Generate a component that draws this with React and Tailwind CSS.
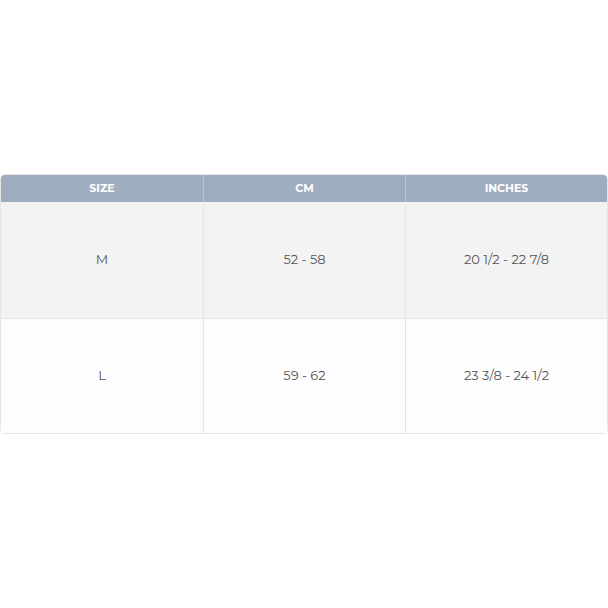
export default function App() {
  const rows = [
    ["M", "52 - 58", "20 1/2 - 22 7/8"],
    ["L", "59 - 62", "23 3/8 - 24 1/2"],
  ];
  return (
    <div className="w-[608px] h-[608px] bg-white pt-[174px] font-['Montserrat','Open_Sans',sans-serif]">
      <div className="w-[608px] rounded-[5px] border border-[#e6e6e6] overflow-hidden">
        <div className="grid grid-cols-[203px_202px_1fr] h-[27px] bg-[#9eadbf] text-white text-[11px] font-bold">
          <div className="flex items-center justify-center border-r border-[#b9c4d1]">SIZE</div>
          <div className="flex items-center justify-center border-r border-[#b9c4d1]">CM</div>
          <div className="flex items-center justify-center">INCHES</div>
        </div>
        {rows.map((r, i) => (
          <div key={i} className={i === 0 ? "grid grid-cols-[203px_202px_1fr] text-[13px] text-[#555] h-[117px] bg-[#f3f3f3] border-b border-[#e8e8e8]" : "grid grid-cols-[203px_202px_1fr] text-[13px] text-[#555] h-[114px] bg-[#fdfdfd]"}>
            <div className="flex items-center justify-center border-r border-[#e6e6e6]">{r[0]}</div>
            <div className="flex items-center justify-center border-r border-[#e6e6e6]">{r[1]}</div>
            <div className="flex items-center justify-center">{r[2]}</div>
          </div>
        ))}
      </div>
    </div>
  );
}
